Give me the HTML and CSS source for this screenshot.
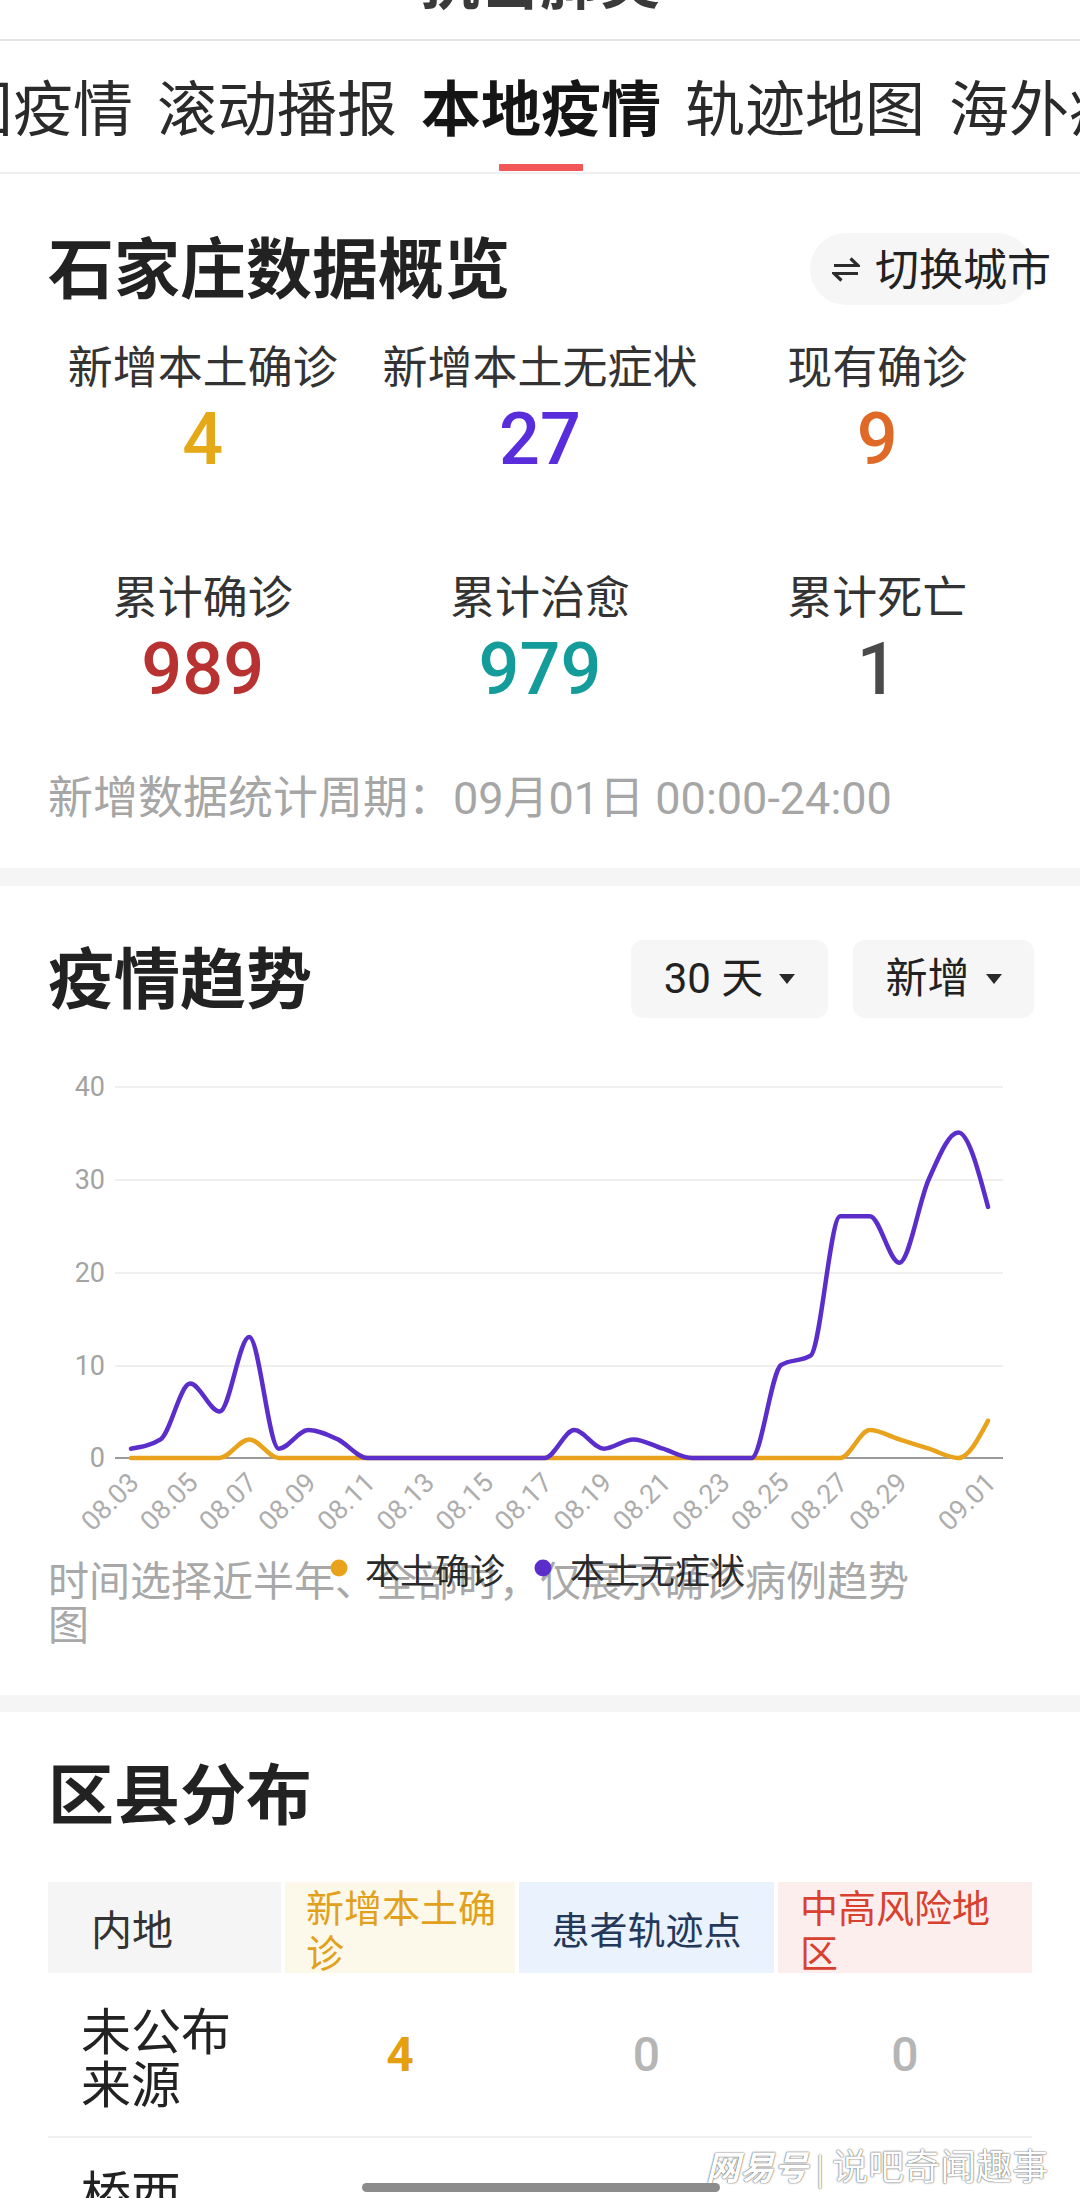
FILE: index.html
```html
<!DOCTYPE html>
<html lang="zh-CN">
<head>
<meta charset="utf-8">
<title>本地疫情</title>
<link rel="stylesheet" href="styles.css">
</head>
<body>
<div class="screen">
  <header class="topbar">
    <div class="page-title">抗击肺炎</div>
  </header>

  <nav class="tabs">
    <div class="tab-track">
      <div class="tab"><span class="tab-text">全国疫情</span></div>
      <div class="tab"><span class="tab-text">滚动播报</span></div>
      <div class="tab active"><span class="tab-text">本地疫情</span><span class="tab-bar"></span></div>
      <div class="tab"><span class="tab-text">轨迹地图</span></div>
      <div class="tab"><span class="tab-text">海外疫情</span></div>
    </div>
  </nav>

  <section class="card overview">
    <div class="card-head">
      <h2 class="card-title">石家庄数据概览</h2>
      <div class="switch-city">
        <svg class="switch-icon" width="28" height="26" viewBox="0 0 28 26">
          <path d="M2 9.5 H26 L18.5 2.5" />
          <path d="M26 17.5 H2 L9.5 24.5" />
        </svg>
        <span class="switch-text">切换城市</span>
      </div>
    </div>
    <div class="stats">
      <div class="stat"><span class="stat-label">新增本土确诊</span><span class="stat-num c-gold">4</span></div>
      <div class="stat"><span class="stat-label">新增本土无症状</span><span class="stat-num c-purple">27</span></div>
      <div class="stat"><span class="stat-label">现有确诊</span><span class="stat-num c-orange">9</span></div>
      <div class="stat"><span class="stat-label">累计确诊</span><span class="stat-num c-red">989</span></div>
      <div class="stat"><span class="stat-label">累计治愈</span><span class="stat-num c-teal">979</span></div>
      <div class="stat"><span class="stat-label">累计死亡</span><span class="stat-num c-dark">1</span></div>
    </div>
    <p class="footnote">新增数据统计周期：09月01日 00:00-24:00</p>
  </section>

  <section class="card trend">
    <div class="card-head trend-head">
      <h2 class="card-title">疫情趋势</h2>
      <div class="filters">
        <div class="filter f-days"><span>30 天</span><i class="caret"></i></div>
        <div class="filter f-type"><span>新增</span><i class="caret"></i></div>
      </div>
    </div>
    <svg class="chart" width="1080" height="496" viewBox="0 0 1080 496">
      <g class="grid">
        <line x1="115" y1="27" x2="1003" y2="27"/>
        <line x1="115" y1="120" x2="1003" y2="120"/>
        <line x1="115" y1="213" x2="1003" y2="213"/>
        <line x1="115" y1="306" x2="1003" y2="306"/>
      </g>
      <line class="axis" x1="115" y1="398" x2="1003" y2="398"/>
      <g class="ylab">
        <text x="105" y="27">40</text>
        <text x="105" y="120">30</text>
        <text x="105" y="213">20</text>
        <text x="105" y="306">10</text>
        <text x="105" y="398">0</text>
      </g>
      <g class="xlab">
        <text x="134" y="418" transform="rotate(-45 134 418)">08.03</text>
        <text x="193.1" y="418" transform="rotate(-45 193.1 418)">08.05</text>
        <text x="252.2" y="418" transform="rotate(-45 252.2 418)">08.07</text>
        <text x="311.3" y="418" transform="rotate(-45 311.3 418)">08.09</text>
        <text x="370.4" y="418" transform="rotate(-45 370.4 418)">08.11</text>
        <text x="429.5" y="418" transform="rotate(-45 429.5 418)">08.13</text>
        <text x="488.6" y="418" transform="rotate(-45 488.6 418)">08.15</text>
        <text x="547.7" y="418" transform="rotate(-45 547.7 418)">08.17</text>
        <text x="606.8" y="418" transform="rotate(-45 606.8 418)">08.19</text>
        <text x="665.9" y="418" transform="rotate(-45 665.9 418)">08.21</text>
        <text x="725" y="418" transform="rotate(-45 725 418)">08.23</text>
        <text x="784.1" y="418" transform="rotate(-45 784.1 418)">08.25</text>
        <text x="843.2" y="418" transform="rotate(-45 843.2 418)">08.27</text>
        <text x="902.3" y="418" transform="rotate(-45 902.3 418)">08.29</text>
        <text x="991" y="418" transform="rotate(-45 991 418)">09.01</text>
      </g>
      <path id="line-confirm" class="series s-confirm" d="M131 398"/>
      <path id="line-asym" class="series s-asym" d="M131 388.7"/>
      <g class="legend">
        <circle cx="339" cy="508" r="8.5" class="dot-confirm"/>
        <text x="365" y="508">本土确诊</text>
        <circle cx="543" cy="508" r="8.5" class="dot-asym"/>
        <text x="570" y="508">本土无症状</text>
      </g>
    </svg>
    <p class="chart-note">时间选择近半年、全部时，仅展示确诊病例趋势图</p>
  </section>

  <section class="card district">
    <h2 class="card-title">区县分布</h2>
    <div class="table">
      <div class="trow thead">
        <div class="th th-area">内地</div>
        <div class="th th-new">新增本土确诊</div>
        <div class="th th-track">患者轨迹点</div>
        <div class="th th-risk">中高风险地区</div>
      </div>
      <div class="trow tbody">
        <div class="td td-name">未公布<br>来源</div>
        <div class="td td-val v-gold">4</div>
        <div class="td td-val v-zero">0</div>
        <div class="td td-val v-zero">0</div>
      </div>
      <div class="trow tbody last">
        <div class="td td-name">桥西</div>
        <div class="td"></div>
        <div class="td"></div>
        <div class="td"></div>
      </div>
    </div>
  </section>

  <div class="watermark"><span class="wm-logo">网易号</span> <span class="wm-sep">|</span> 说吧奇闻趣事</div>
  <div class="home-bar"></div>
</div>
<script src="script.js"></script>
</body>
</html>
```

FILE: styles.css
```css
* {
  box-sizing: border-box;
  margin: 0;
  padding: 0;
}

body {
  margin: 0;
  background: #ffffff;
  font-family: Roboto, "Noto Sans CJK SC", sans-serif;
  color: #222222;
}

.screen {
  width: 1080px;
  height: 2198px;
  overflow: hidden;
  position: relative;
  background: #f5f5f5;
}

/* top bar (scrolled mostly out of view) */
.topbar {
  height: 41px;
  background: #ffffff;
  border-bottom: 2px solid #e4e4e4;
  overflow: hidden;
}

.page-title {
  font-family: "Noto Sans CJK SC", sans-serif;
  font-size: 60px;
  line-height: 60px;
  font-weight: 700;
  color: #3a3a3a;
  text-align: center;
  margin-top: -52px;
}

/* tabs */
.tabs {
  height: 133px;
  background: #ffffff;
  border-bottom: 2px solid #efefef;
  overflow: hidden;
}

.tab-track {
  display: flex;
  gap: 24px;
  margin-left: -107px;
  white-space: nowrap;
}

.tab {
  flex-shrink: 0;
  display: flex;
  flex-direction: column;
  align-items: center;
  padding-top: 29px;
}

.tab-text {
  font-family: "Noto Sans CJK SC", sans-serif;
  font-size: 60px;
  line-height: 70px;
  color: #2a2a2a;
}

.tab.active .tab-text {
  font-weight: 700;
  color: #151515;
}

.tab-bar {
  width: 84px;
  height: 7px;
  margin-top: 24px;
  background: #f25656;
  border-radius: 1px;
}

/* cards */
.card {
  background: #ffffff;
  padding: 0 48px;
}

.card-head {
  display: flex;
  justify-content: space-between;
  align-items: center;
  height: 72px;
}

.card-title {
  font-family: "Noto Sans CJK SC", sans-serif;
  font-size: 66px;
  line-height: 72px;
  font-weight: 700;
  color: #222222;
}

.card-head .card-title {
  padding-bottom: 10px;
}

/* overview */
.overview {
  padding-top: 59px;
  padding-bottom: 43px;
}

.switch-city {
  width: 223px;
  height: 72px;
  border-radius: 36px;
  background: #f6f6f6;
  display: flex;
  align-items: center;
  gap: 15px;
  padding-left: 22px;
  margin-right: -1px;
  white-space: nowrap;
}

.switch-icon {
  flex-shrink: 0;
  fill: none;
  stroke: #2c2c2c;
  stroke-width: 3.2;
  stroke-linejoin: miter;
}

.switch-text {
  font-family: "Noto Sans CJK SC", sans-serif;
  font-size: 44px;
  line-height: 52px;
  color: #222222;
  padding-bottom: 4px;
}

.stats {
  display: grid;
  grid-template-columns: repeat(3, 1fr);
  row-gap: 89px;
  margin: 34px -14px 0;
}

.stat {
  display: flex;
  flex-direction: column;
  align-items: center;
}

.stat-label {
  font-family: "Noto Sans CJK SC", sans-serif;
  font-size: 45px;
  line-height: 52px;
  color: #333333;
  white-space: nowrap;
}

.stat-num {
  font-family: Roboto, sans-serif;
  font-size: 72px;
  line-height: 80px;
  font-weight: 500;
  margin-top: 9px;
}

.c-gold { color: #e5a816; }
.c-purple { color: #5a2ddc; }
.c-orange { color: #df6a27; }
.c-red { color: #b73230; }
.c-teal { color: #139c99; }
.c-dark { color: #4a4a4a; }

.footnote {
  margin-top: 63px;
  font-size: 45px;
  line-height: 52px;
  color: #a6a6a6;
  white-space: nowrap;
}

/* trend */
.trend {
  margin-top: 18px;
  padding-top: 54px;
  padding-bottom: 51px;
}

.trend-head {
  height: 78px;
}

.filters {
  display: flex;
  gap: 25px;
  margin-right: -2px;
}

.filter {
  height: 78px;
  border-radius: 12px;
  background: #f6f6f6;
  display: flex;
  align-items: center;
  justify-content: center;
  gap: 16px;
  font-size: 42px;
  line-height: 50px;
  color: #222222;
}

.f-days { width: 197px; }
.f-type { width: 181px; }

.caret {
  width: 0;
  height: 0;
  border-left: 8px solid transparent;
  border-right: 8px solid transparent;
  border-top: 10px solid #2a2a2a;
}

.chart {
  display: block;
  margin: 42px -48px 0;
  overflow: visible;
  position: relative;
  z-index: 1;
}

.grid line {
  stroke: #efefef;
  stroke-width: 2;
}

.axis {
  stroke: #9a9a9a;
  stroke-width: 2;
}

.ylab text {
  font-family: Roboto, sans-serif;
  font-size: 27px;
  fill: #a3a3a3;
  text-anchor: end;
  dominant-baseline: central;
}

.xlab text {
  font-family: Roboto, sans-serif;
  font-size: 27px;
  fill: #adadad;
  text-anchor: end;
  dominant-baseline: central;
}

.series {
  fill: none;
  stroke-width: 4.5;
  stroke-linejoin: round;
  stroke-linecap: round;
}

.s-confirm { stroke: #e9a21b; }
.s-asym { stroke: #5b2ecb; }

.dot-confirm { fill: #e9a21b; }
.dot-asym { fill: #5b2ecb; }

.legend text {
  font-family: "Noto Sans CJK SC", sans-serif;
  font-size: 35px;
  fill: #2a2a2a;
  dominant-baseline: central;
}

.chart-note {
  width: 880px;
  font-family: "Noto Sans CJK SC", sans-serif;
  font-size: 41px;
  line-height: 44px;
  color: #a8a8a8;
}

/* district */
.district {
  margin-top: 17px;
  padding-top: 42px;
  padding-bottom: 40px;
}

.table {
  margin-top: 56px;
}

.trow {
  display: grid;
  grid-template-columns: 233px 230px 255px 254px;
  column-gap: 4px;
}

.thead {
  height: 91px;
}

.th {
  display: flex;
  align-items: center;
  font-family: "Noto Sans CJK SC", sans-serif;
  font-size: 38px;
  line-height: 45px;
}

.th-area {
  background: #f5f5f5;
  padding-left: 43px;
  font-size: 41px;
  color: #333333;
}

.th-new {
  background: #fdf9ea;
  color: #e2a11c;
  padding: 0 15px 0 21px;
}

.th-track {
  background: #e9f2fd;
  color: #24395a;
  justify-content: center;
}

.th-risk {
  background: #fdeeee;
  color: #d8412f;
  padding: 0 15px 0 22px;
}

.tbody {
  height: 165px;
  align-items: center;
  border-bottom: 2px solid #f0f0f0;
}

.tbody.last {
  height: 160px;
  align-items: start;
  border-bottom: none;
}

.td-name {
  font-family: "Noto Sans CJK SC", sans-serif;
  font-size: 50px;
  line-height: 53px;
  color: #222222;
  padding-left: 33px;
}

.tbody.last .td-name {
  padding-top: 27px;
}

.td-val {
  text-align: center;
  font-family: Roboto, sans-serif;
  font-size: 48px;
  line-height: 56px;
}

.v-gold {
  color: #e5a00f;
  font-weight: 700;
}

.v-zero {
  color: #b5b5b5;
  font-weight: 500;
}

/* overlays */
.watermark {
  position: absolute;
  left: 706px;
  top: 2143px;
  font-family: "Noto Sans CJK SC", sans-serif;
  font-size: 36px;
  line-height: 42px;
  color: #ffffff;
  white-space: nowrap;
  text-shadow: 0 0 2px rgba(0, 0, 0, 0.55), 0 0 1px rgba(0, 0, 0, 0.6);
}

.wm-logo {
  font-style: italic;
  font-weight: 700;
  font-size: 34px;
}

.wm-sep {
  font-size: 30px;
}

.home-bar {
  position: absolute;
  left: 362px;
  top: 2183px;
  width: 358px;
  height: 9px;
  border-radius: 5px;
  background: #8c8c8c;
}
```

FILE: script.js
```js
(function () {
  var X0 = 131, DX = 29.55, Y0 = 398, K = 9.3;
  var series = {
    'line-confirm': [0,0,0,0,2,0,0,0,0,0,0,0,0,0,0,0,0,0,0,0,0,0,0,0,0,3,2,1,0,4],
    'line-asym': [1,2,8,5,13,1,3,2,0,0,0,0,0,0,0,3,1,2,1,0,0,0,10,11,26,26,21,30,35,27]
  };

  function tangents(v) {
    var n = v.length, s = [], t = [];
    var i;
    for (i = 0; i < n - 1; i++) s.push(v[i + 1] - v[i]);
    for (i = 1; i < n - 1; i++) {
      var a = s[i - 1], b = s[i];
      if (a * b <= 0) { t[i] = 0; continue; }
      var p = (a + b) / 2;
      t[i] = (a > 0 ? 1 : -1) * Math.min(2 * Math.abs(a), 2 * Math.abs(b), Math.abs(p));
    }
    t[0] = (3 * s[0] - t[1]) / 2;
    t[n - 1] = (3 * s[n - 2] - t[n - 2]) / 2;
    return t;
  }

  function X(i) { return X0 + DX * i; }
  function Y(v) { return Y0 - K * v; }
  function f(n) { return n.toFixed(1); }

  Object.keys(series).forEach(function (id) {
    var v = series[id], t = tangents(v), h = DX / 3;
    var d = 'M' + f(X(0)) + ' ' + f(Y(v[0]));
    for (var i = 0; i < v.length - 1; i++) {
      d += ' C' + f(X(i) + h) + ' ' + f(Y(v[i] + t[i] / 3)) + ' ' +
        f(X(i + 1) - h) + ' ' + f(Y(v[i + 1] - t[i + 1] / 3)) + ' ' +
        f(X(i + 1)) + ' ' + f(Y(v[i + 1]));
    }
    var el = document.getElementById(id);
    if (el) el.setAttribute('d', d);
  });
})();
```
